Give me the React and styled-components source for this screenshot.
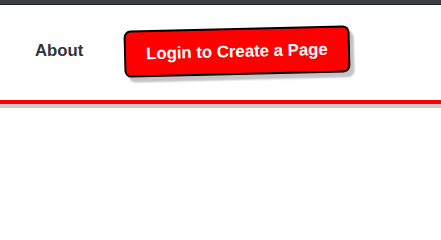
import styled, { createGlobalStyle } from "styled-components";

const GlobalStyle = createGlobalStyle`
  html, body {
    margin: 0;
    padding: 0;
    background: #ffffff;
    font-family: "Liberation Sans", Arial, sans-serif;
  }
`;

const TopStrip = styled.div`
  height: 4px;
  background: #3d4046;
  border-bottom: 1px solid #1f2124;
`;

const HeaderWrap = styled.div`
  border-bottom: 4px solid #cccccc;
`;

const Header = styled.header`
  display: flex;
  align-items: center;
  height: 95px;
  padding-left: 35px;
  gap: 41px;
  background: #ffffff;
  border-bottom: 4px solid #ff0000;
`;

const NavLink = styled.a`
  font-size: 16.7px;
  font-weight: 700;
  color: #2e343b;
  text-decoration: none;
  margin-top: -3px;
`;

const LoginButton = styled.button`
  font-family: "Liberation Sans", Arial, sans-serif;
  font-size: 16.8px;
  font-weight: 700;
  color: #ffffff;
  background: #ff0000;
  border: 2.5px solid #000000;
  border-radius: 7px;
  padding: 12px 20px;
  line-height: 19px;
  transform: rotate(-1.4deg);
  box-shadow: 4px 5px 2px #c4c4c4;
  cursor: pointer;
  margin-top: -2px;
`;

export default function App() {
  return (
    <>
      <GlobalStyle />
      <TopStrip />
      <HeaderWrap>
        <Header>
          <NavLink href="#">About</NavLink>
          <LoginButton>Login to Create a Page</LoginButton>
        </Header>
      </HeaderWrap>
    </>
  );
}
